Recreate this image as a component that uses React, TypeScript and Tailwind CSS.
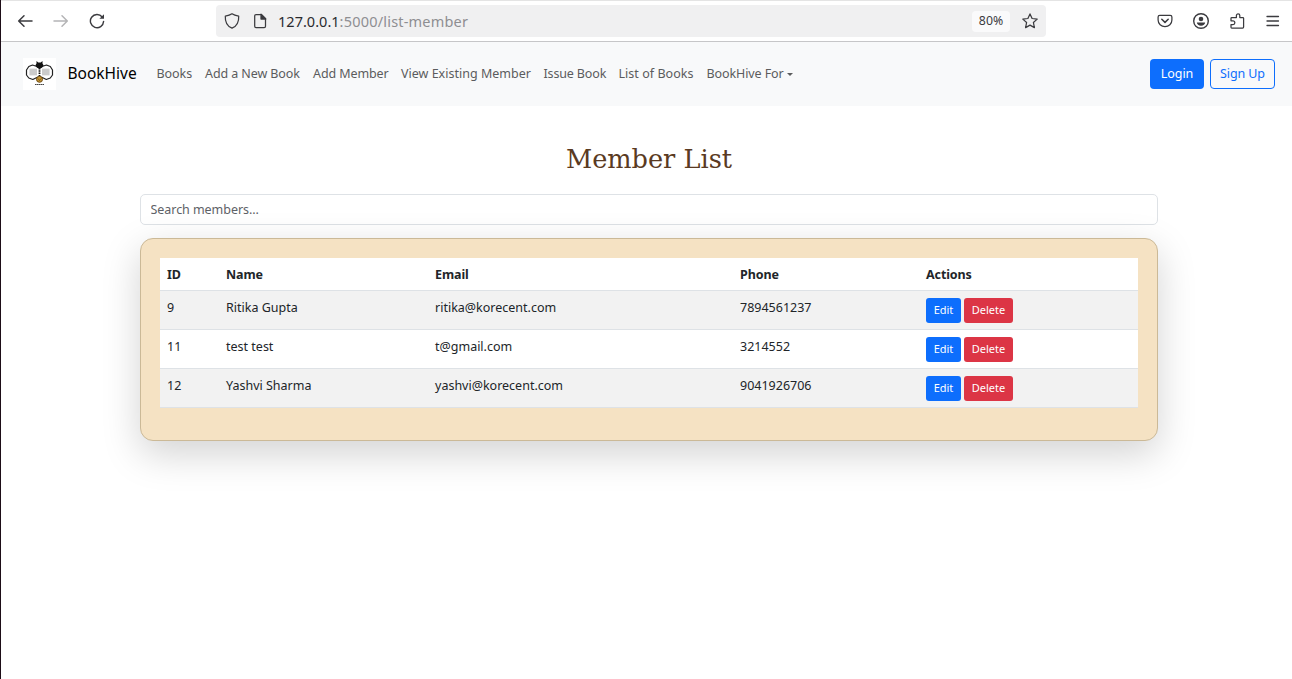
import React from "react";

const members = [
  { id: "9", name: "Ritika Gupta", email: "ritika@korecent.com", phone: "7894561237" },
  { id: "11", name: "test test", email: "t@gmail.com", phone: "3214552" },
  { id: "12", name: "Yashvi Sharma", email: "yashvi@korecent.com", phone: "9041926706" },
];

const links = [
  { label: "Books", box: "w-[48.5px] tracking-[-0.05px]" },
  { label: "Add a New Book", box: "w-[108px] tracking-[-0.1px]" },
  { label: "Add Member", box: "w-[88px] tracking-[-0.1px]" },
  { label: "View Existing Member", box: "w-[142.5px] tracking-[0.01px]" },
  { label: "Issue Book", box: "w-[75px] tracking-[-0.15px]" },
  { label: "List of Books", box: "w-[88px] tracking-[0.03px]" },
];

function Icon({ children, className = "" }: { children: React.ReactNode; className?: string }) {
  return (
    <svg
      viewBox="0 0 16 16"
      className={`size-4 shrink-0 ${className}`}
      fill="none"
      stroke="currentColor"
      strokeWidth="1.25"
      strokeLinecap="round"
      strokeLinejoin="round"
    >
      {children}
    </svg>
  );
}

function BrowserBar() {
  return (
    <div className="flex h-[42px] items-center border-t border-b border-t-[#e4e4e4] border-b-[#c6c6c8] bg-white pl-4 text-[#3b3b3f]">
      <Icon>
        <path d="M15 8H2M7 2.7 1.7 8 7 13.3" strokeWidth="1.5" />
      </Icon>
      <Icon className="ml-5 text-[#b4b4b6]">
        <path d="M1 8h13M9 2.7 14.3 8 9 13.3" strokeWidth="1.5" />
      </Icon>
      <Icon className="ml-5">
        <path d="M13.2 4A6.6 6.6 0 1 0 14.6 8.4" strokeWidth="1.4" />
        <path d="M15 1.2v4.6h-4.6z" fill="currentColor" stroke="none" />
      </Icon>
      <div className="ml-[111px] flex h-8 w-[830px] items-center rounded bg-[#f0f0f1] pl-2">
        <Icon>
          <path d="M8 .8c2 1.5 4.3 2 6.7 2.3.3 5.3-1 9.8-6.7 12.1C2.300 12.900 1 8.400 1.300 3.100 3.700 2.800 6 2.300 8 .8z" />
        </Icon>
        <Icon className="ml-3">
          <path d="M4 1.500h5.200L13.500 5.800v7.400c0 .8-.5 1.300-1.300 1.300H4c-.8 0-1.300-.5-1.300-1.300V2.800C2.700 2 3.200 1.500 4 1.500z" />
          <path d="M9 1.200v4.800h4.800z" fill="currentColor" />
        </Icon>
        <div className="ml-[10px] w-[694px] text-[14.5px] leading-5 tracking-[0.2px] text-[#8e8e91]">
          <span className="tracking-[0.02px] text-[#2a2a2e]">127.0.0.1</span>:5000/list-member
        </div>
        <div className="flex h-[21px] w-[38px] items-center justify-center rounded-sm bg-[#fafafb] pt-px text-[12.3px]">
          80%
        </div>
        <Icon className="ml-3">
          <path d="m8 .9 2.100 4.600 5.100.6-3.800 3.400 1 5.100L8 12.100l-4.400 2.500 1-5.100L.8 6.100l5.100-.6z" />
        </Icon>
      </div>
      <Icon className="ml-[111px]">
        <path d="M2.800 2.400h10.400c1 0 1.700.6 1.700 1.600v2.900c0 3.800-3.100 6.700-6.900 6.700S1.100 10.700 1.100 6.900V4c0-1 .7-1.600 1.700-1.600z" />
        <path d="M4.800 6.300 8 9.400l3.200-3.100" strokeWidth="1.500" />
      </Icon>
      <Icon className="ml-5">
        <circle cx="8" cy="8" r="7.300" strokeWidth="1.400" />
        <circle cx="8" cy="6" r="2.300" fill="currentColor" stroke="none" />
        <path d="M3.900 9.600h8.200c0 2-1.700 3.200-4.100 3.200s-4.100-1.200-4.100-3.200z" fill="currentColor" stroke="none" />
      </Icon>
      <Icon className="ml-5">
        <path d="M2 7.800V5.300c0-.5.300-.8.800-.8h4.600V2.600a1.700 1.700 0 0 1 3.400 0v1.900h3c.5 0 .8.300.8.800V14c0 .7-.3 1-1 1H2.800c-.5 0-.8-.3-.8-.8v-2.700h2a1.850 1.850 0 0 0 0-3.700z" />
      </Icon>
      <Icon className="ml-5">
        <path d="M2 3.500h11.500M2 8h11.500M2 12.500h11.500" strokeWidth="1.300" />
      </Icon>
    </div>
  );
}

function Logo() {
  return (
    <svg viewBox="0 0 33 32" className="h-8 w-[33px] shrink-0">
      <rect width="33" height="32" fill="#fff" />
      <g fill="none" stroke="#222" strokeWidth="1.200" strokeLinejoin="round">
        <path d="M14 8.500 9.500 7 5.800 8.500 3.500 12v5l2.300 3 4 1.500 5-2.500" />
        <path d="M19 8.500 23.500 7l3.800 1.500 2.200 3.500v5l-2.200 3-4 1.500-5-2.500" />
      </g>
      <path d="M6.500 10.500H14v7H6.500zM19 10.500h7.500v7H19z" fill="#dadada" />
      <path d="M6.500 12h7.500M6.500 14h7.500M6.500 16h7.500M19 12h7.500M19 14h7.500M19 16h7.500" stroke="#b5b5b5" strokeWidth=".8" />
      <path d="m13.500 3 1.800 1.600h2.400L19.500 3v2.500l1.200 2-1.700 2.200-2.500 1-2.500-1-1.700-2.200 1.200-2z" fill="#111" />
      <path d="M16.500 10v9" stroke="#111" strokeWidth="1.800" strokeDasharray="1.500 .8" />
      <circle cx="16.500" cy="21.300" r="3" fill="#c59432" stroke="#6d4b13" />
      <path d="m15 20.500 1.500 2 1.500-2" fill="none" stroke="#6d4b13" strokeWidth=".8" />
      <path d="M12 26.500h9" stroke="#444" strokeWidth="1.200" strokeDasharray="1.600 .4" />
    </svg>
  );
}

function Navbar() {
  return (
    <nav className="flex h-16 items-center bg-[#f8f9fa] pr-[17px] pl-[22px]">
      <Logo />
      <span className="ml-[11.500px] w-[89px] pb-[3px] text-[15.5px] leading-6 text-black">BookHive</span>
      <div className="flex text-[12.5px] text-[#5b5c5d]">
        {links.map((link) => (
          <a key={link.label} className={link.box}>
            {link.label}
          </a>
        ))}
        <a className="flex items-center tracking-[-0.1px]">
          BookHive For
          <span className="ml-[3px] border-x-[3px] border-t-[3px] border-x-transparent border-t-[#5b5c5d]" />
        </a>
      </div>
      <div className="ml-auto flex gap-1.5 text-[12.5px]">
        <button className="h-[30px] w-[54px] rounded bg-[#0d6efd] tracking-[-0.05px] text-white">Login</button>
        <button className="h-[30px] w-[65px] rounded border border-[#0d6efd] tracking-[-0.1px] text-[#0d6efd]">
          Sign Up
        </button>
      </div>
    </nav>
  );
}

export default function App() {
  return (
    <div className="h-[679px] overflow-hidden border-l border-[#1d0d17] bg-white font-['Noto_Sans','Open_Sans',sans-serif] whitespace-nowrap text-[#212529]">
      <BrowserBar />
      <Navbar />
      <main className="ml-[139px] w-[1018px] pt-[35px]">
        <h1 className="text-center font-['DejaVu_Serif',serif] text-[25.6px] leading-9 text-[#5a3a22]">Member List</h1>
        <input
          className="mt-[17px] block h-[31px] w-full rounded-[5px] border border-[#dee2e6] px-[9.500px] text-[12.5px] tracking-[-0.05px] placeholder:text-[#5d6166]"
          placeholder="Search members..."
        />
        <section className="relative mt-[13px] h-[203px] rounded-[13px] border border-[#cbb997] bg-[#f5e2c3] p-[19px] shadow-[0_12.8px_38.4px_rgba(0,0,0,0.175)]">
          <table className="w-full table-fixed border-separate border-spacing-0 text-left text-[12.5px] leading-[19px]">
            <colgroup>
              <col className="w-[59px]" />
              <col className="w-[209px]" />
              <col className="w-[305px]" />
              <col className="w-[186px]" />
              <col />
            </colgroup>
            <thead>
              <tr className="h-[33px] bg-white">
                {["ID", "Name", "Email", "Phone", "Actions"].map((h) => (
                  <th key={h} className="border-b border-[#dee2e6] px-[7px] py-0 font-bold tracking-[-0.1px]">
                    {h}
                  </th>
                ))}
              </tr>
            </thead>
            <tbody className="[&_td]:border-b [&_td]:border-[#dee2e6] [&_td]:px-[7px] [&_td]:pt-[7px]">
              {members.map((m) => (
                <tr key={m.id} className="h-[39px] bg-white align-top odd:bg-[#f2f2f2]">
                  <td>{m.id}</td>
                  <td>{m.name}</td>
                  <td>{m.email}</td>
                  <td>{m.phone}</td>
                  <td>
                    <div className="flex gap-[3px] text-[11px] leading-[24px] text-white">
                      <button className="h-[25px] w-[35px] rounded-[3px] bg-[#0d6efd] pb-px">Edit</button>
                      <button className="h-[25px] w-[49px] rounded-[3px] bg-[#dc3545] pb-px">Delete</button>
                    </div>
                  </td>
                </tr>
              ))}
            </tbody>
          </table>
        </section>
      </main>
    </div>
  );
}
